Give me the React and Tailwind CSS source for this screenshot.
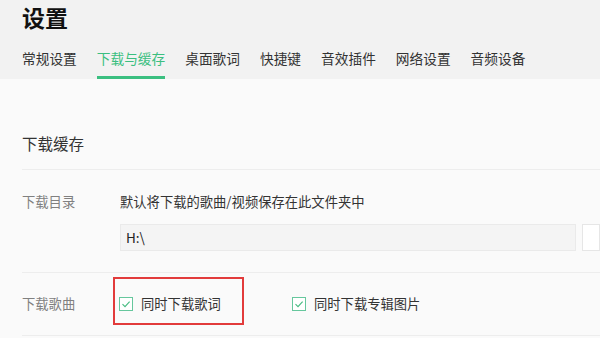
import React from "react";

const tabs = ["常规设置", "下载与缓存", "桌面歌词", "快捷键", "音效插件", "网络设置", "音频设备"];

function CheckBox({ label }) {
  return (
    <div className="flex items-center gap-[8px]">
      <div className="h-[14px] w-[14px] border border-[#66c79d] bg-white flex items-center justify-center shrink-0">
        <svg width="10" height="10" viewBox="0 0 10 10" fill="none" stroke="#45bb80" strokeWidth="1.1">
          <polyline points="1.5,5.2 4,7.6 8.6,2.6" />
        </svg>
      </div>
      <span className="text-[13.3px] leading-[20px] text-[#333]">{label}</span>
    </div>
  );
}

export default function App() {
  const active = 1;
  return (
    <div
      className="w-[600px] h-[338px] overflow-hidden bg-[#fafafa]"
      style={{ fontFamily: '"Noto Sans CJK SC", "Noto Sans", sans-serif' }}
    >
      {/* Header */}
      <div className="bg-[#f2f2f2] px-[22px] pt-[4px]">
        <h1 className="text-[23px] leading-[26px] font-bold text-[#111]">设置</h1>
        <div className="flex gap-[20px] mt-[18px]">
          {tabs.map((t, i) => (
            <div key={t} className="flex flex-col">
              <span className={"text-[13.7px] leading-[20px] " + (i === active ? "text-[#3bbf80]" : "text-[#333]")}>{t}</span>
              <div className={"mt-[8px] h-[3px] " + (i === active ? "bg-[#3bbf80]" : "bg-transparent")} />
            </div>
          ))}
        </div>
      </div>

      {/* Content */}
      <div className="pl-[22px]">
        <div className="pt-[54px] pb-[16px] border-b border-[#ededed] text-[15.5px] leading-[20px] text-[#333]">下载缓存</div>

        <div className="flex pt-[22px] pb-[21px] border-b border-[#ededed]">
          <div className="w-[98px] shrink-0 text-[13.3px] leading-[20px] text-[#808080]">下载目录</div>
          <div className="flex-1 min-w-0">
            <p className="text-[13.3px] leading-[20px] text-[#333]">默认将下载的歌曲/视频保存在此文件夹中</p>
            <div className="flex gap-[6px] mt-[12px]">
              <div className="w-[456px] h-[27px] shrink-0 bg-[#f4f4f4] border border-[#eaeaea] px-[5px] flex items-center text-[13.5px] text-[#222]">H:\</div>
              <div className="flex-1 h-[27px] bg-white border border-[#e6e6e6]" />
            </div>
          </div>
        </div>

        <div className="relative flex items-center h-[63px] border-b border-[#ededed]">
          <div className="w-[97px] shrink-0 text-[13.3px] leading-[20px] text-[#808080]">下载歌曲</div>
          <div className="w-[173px] shrink-0">
            <CheckBox label="同时下载歌词" />
          </div>
          <CheckBox label="同时下载专辑图片" />
          <div className="absolute left-[91px] top-[4px] w-[131px] h-[48px] border-2 border-[#e23b3b] pointer-events-none" />
        </div>
      </div>
    </div>
  );
}
